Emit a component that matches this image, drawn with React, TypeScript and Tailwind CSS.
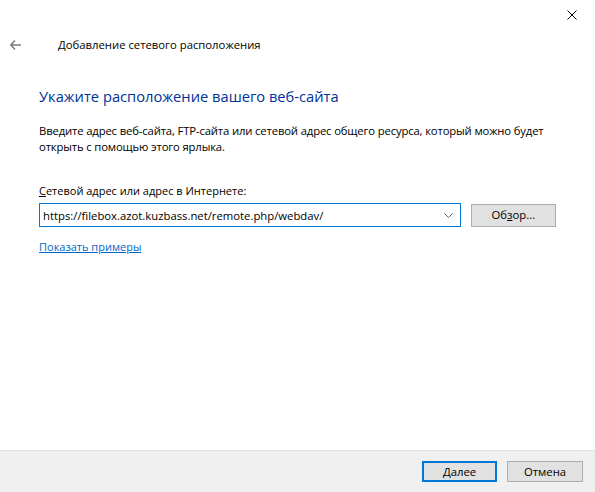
import { useState } from 'react'

const font = { fontFamily: '"Open Sans", "Noto Sans", Arial, sans-serif' }

export default function App() {
  const [address, setAddress] = useState('https://filebox.azot.kuzbass.net/remote.php/webdav/')

  return (
    <div className="w-[595px] h-[492px] bg-white flex flex-col text-black" style={font}>
      {/* заголовок окна */}
      <div className="h-[30px] flex justify-end items-start">
        <button className="w-[46px] h-[30px] flex items-center justify-center">
          <svg width="10" height="10" viewBox="0 0 10 10">
            <path d="M0.5 0.5 L9.5 9.5 M9.5 0.5 L0.5 9.5" stroke="#000" strokeWidth="1" />
          </svg>
        </button>
      </div>

      <div className="h-[30px] flex items-center">
        <div className="w-[58px] pl-[10px] flex items-center">
          <svg width="11" height="10" viewBox="0 0 11 10">
            <path d="M5 0.5 L0.8 5 L5 9.5 M0.8 5 H11" stroke="#7a7a7a" strokeWidth="1.4" fill="none" />
          </svg>
        </div>
        <span className="text-[11.3px]">Добавление сетевого расположения</span>
      </div>

      {/* основная часть */}
      <div className="flex-1 px-[39px]">
        <h1 className="mt-[26px] text-[14.7px] leading-[20px] text-[#003399]">
          Укажите расположение вашего веб-сайта
        </h1>
        <p className="mt-[17px] text-[11.3px] leading-[16px] tracking-[-0.15px] whitespace-nowrap">
          Введите адрес веб-сайта, FTP-сайта или сетевой адрес общего ресурса, который можно будет
          <br />
          открыть с помощью этого ярлыка.
        </p>

        <label className="block mt-[28px] text-[11px] leading-[16px]">
          <span className="underline">С</span>етевой адрес или адрес в Интернете:
        </label>
        <div className="mt-[4px] flex items-center">
          <div className="w-[425px] h-[24px] border border-[#0078d7] flex items-center">
            <input
              value={address}
              onChange={e => setAddress(e.target.value)}
              className="flex-1 min-w-0 h-full px-[3px] text-[11.3px] outline-none bg-transparent"
              style={font}
            />
            <div className="w-[22px] flex items-center justify-center">
              <svg width="9" height="5" viewBox="0 0 9 5">
                <path d="M0.5 0.5 L4.5 4.5 L8.5 0.5" stroke="#606060" strokeWidth="1" fill="none" />
              </svg>
            </div>
          </div>
          <button className="ml-[10px] w-[86px] h-[23px] bg-[#e1e1e1] border border-[#adadad] text-[11.3px]">
            Об<span className="underline">з</span>ор...
          </button>
        </div>

        <a href="#" className="inline-block mt-[12px] text-[11px] text-[#0066cc] underline">
          Показать примеры
        </a>
      </div>

      {/* нижняя панель */}
      <div className="h-[42px] bg-[#f0f0f0] border-t border-[#dfdfdf] flex items-center justify-end pr-[12px] gap-[10px]">
        <button className="w-[75px] h-[21px] bg-[#e1e1e1] border-2 border-[#0078d7] text-[11.3px] leading-none">
          <span className="underline">Д</span>алее
        </button>
        <button className="w-[76px] h-[21px] bg-[#e1e1e1] border border-[#adadad] text-[11.3px] leading-none">
          Отмена
        </button>
      </div>
    </div>
  )
}
